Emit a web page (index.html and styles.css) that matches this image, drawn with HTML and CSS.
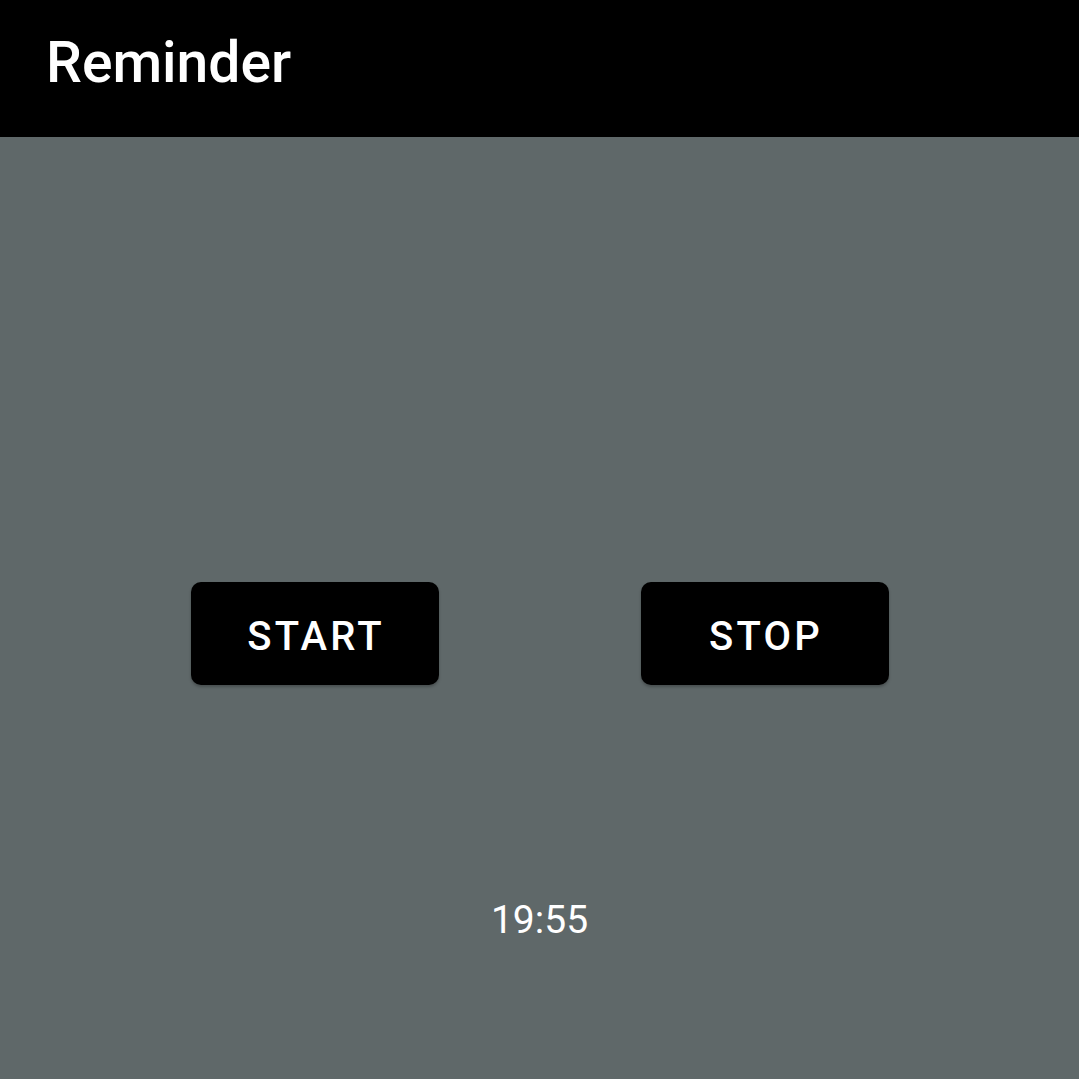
FILE: index.html
```html
<!DOCTYPE html>
<html>
<head>
<meta charset="utf-8">
<link rel="stylesheet" href="styles.css">
</head>
<body>
<header class="appbar"><h1 class="title">Reminder</h1></header>
<main class="content">
  <div class="buttons">
    <button class="btn">START</button>
    <button class="btn">STOP</button>
  </div>
  <div class="time">19:55</div>
</main>
</body>
</html>
```
FILE: styles.css
```css
html, body { margin: 0; padding: 0; height: 100%; }
body {
  background: #5f6869;
  font-family: Roboto, "Noto Sans", sans-serif;
  color: #fff;
}
.appbar {
  height: 137px;
  background: #000;
  display: flex;
  align-items: center;
  padding-left: 46px;
  box-sizing: border-box;
}
.title {
  margin: 0;
  font-size: 57px;
  font-weight: 500;
  line-height: 1;
  padding-bottom: 12px;
}
.content {
  display: flex;
  flex-direction: column;
  align-items: center;
  padding-top: 445px;
}
.buttons {
  display: flex;
  gap: 202px;
}
.btn {
  width: 248px;
  height: 103px;
  background: #000;
  color: #fff;
  border: none;
  border-radius: 10px;
  font-family: Roboto, sans-serif;
  font-weight: 500;
  font-size: 40px;
  letter-spacing: 0.08em;
  padding: 5px 0 0 3px;
  box-shadow: 0 2px 3px rgba(0,0,0,0.25);
}
.time {
  margin-top: 212px;
  font-size: 39px;
  line-height: 46px;
  letter-spacing: 0;
}
```
